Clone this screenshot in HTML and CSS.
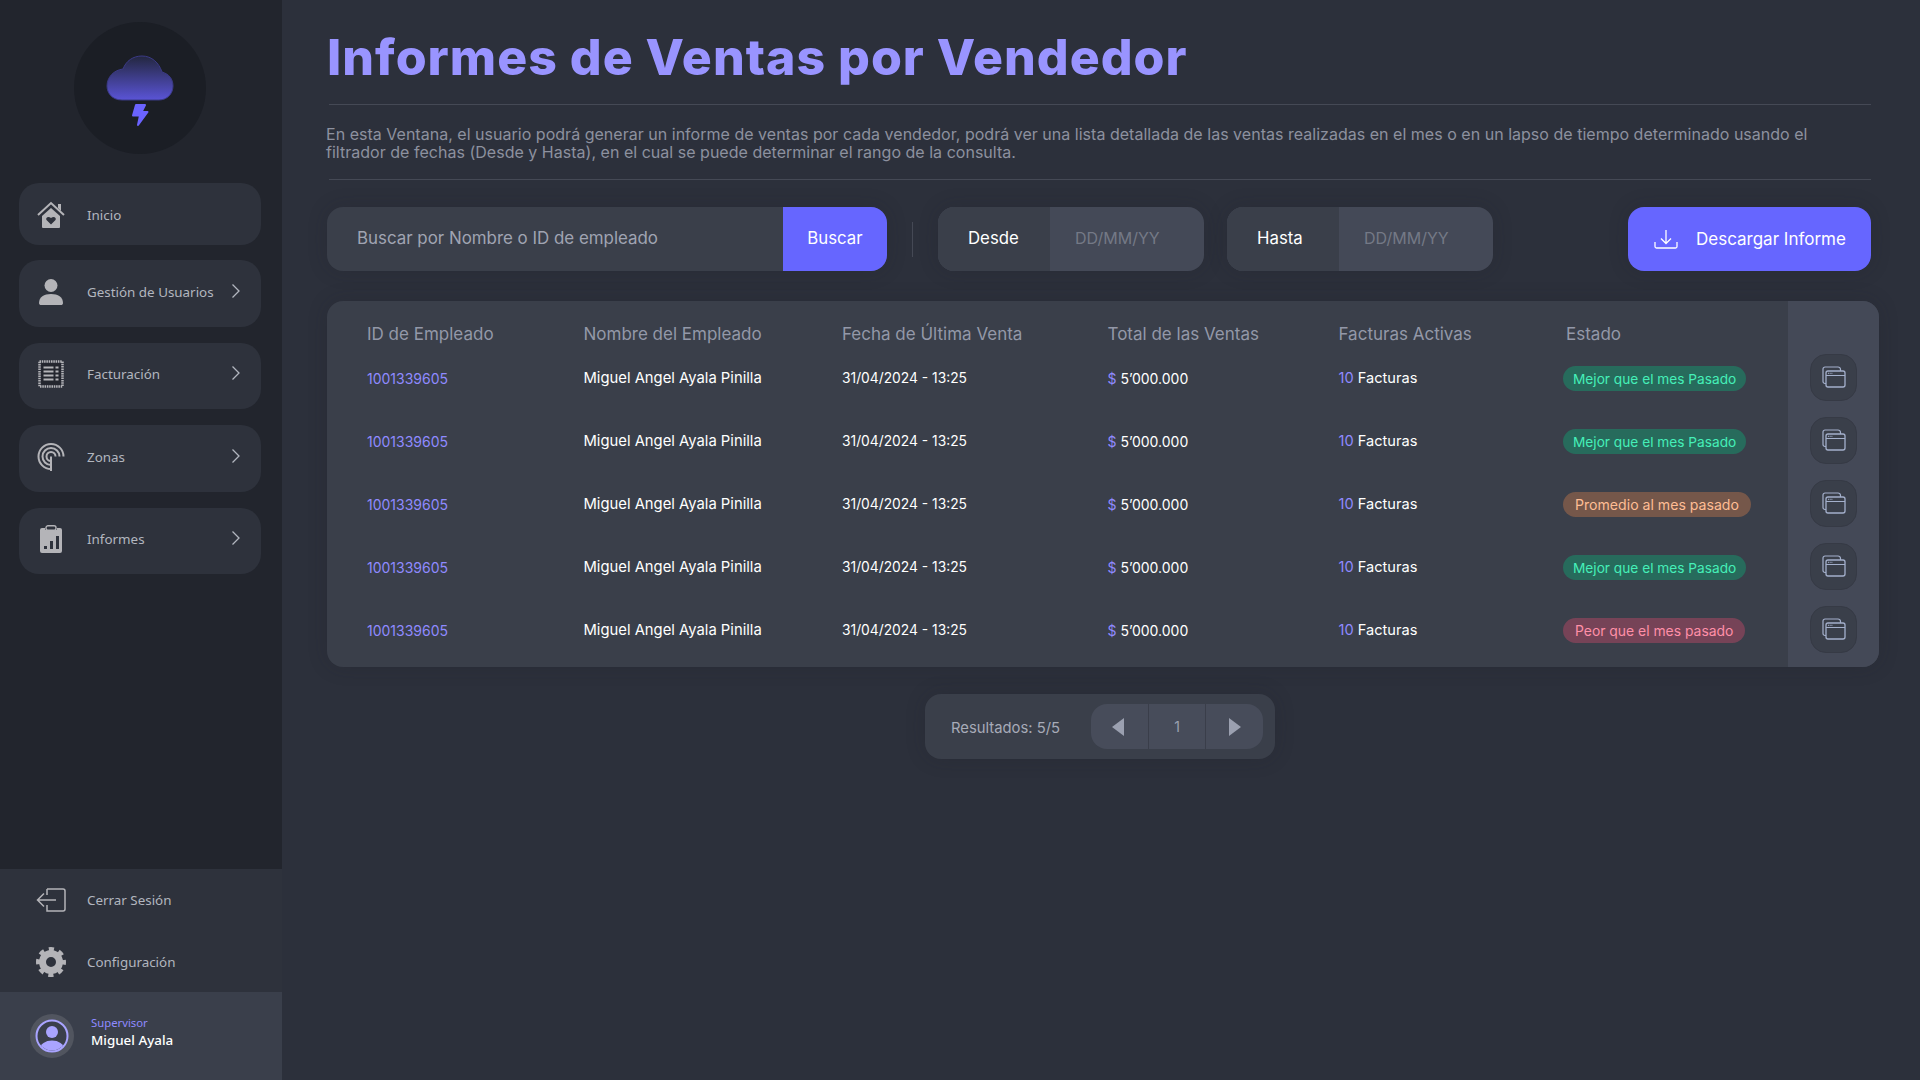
FILE: index.html
```html
<!DOCTYPE html>
<html lang="es">
<head>
    <meta charset="UTF-8">
    <meta name="viewport" content="width=device-width, initial-scale=1.0">
    <title>Informes de Ventas por Vendedor</title>
    <link rel="stylesheet" href="styles.css">
</head>
<body>
    <svg class="sprite" aria-hidden="true">
        <symbol id="icon-chevron" viewBox="0 0 9 16">
            <path d="M1.5 1.5 8 8l-6.5 6.5" fill="none" stroke="currentColor" stroke-width="1.3"/>
        </symbol>
        <symbol id="icon-window" viewBox="0 0 24 22">
            <path d="M4 17.5H3a2 2 0 0 1-2-2V3a2 2 0 0 1 2-2h13a2.500 2.500 0 0 1 2.500 2.500V5" fill="none" stroke="currentColor" stroke-width="1.200"/>
            <rect x="4" y="5" width="19" height="16" rx="2" fill="none" stroke="currentColor" stroke-width="1.300"/>
            <path d="M4 9.500h19" stroke="currentColor" stroke-width="1.200"/>
            <path d="M6 7.300h5" stroke="currentColor" stroke-width="1" stroke-dasharray="1 .7"/>
        </symbol>
    </svg>

    <aside class="sidebar">
        <div class="logo">
            <svg width="68" height="72" viewBox="0 0 68 72">
                <defs>
                    <linearGradient id="cloud" x1="0" y1="0" x2="0" y2="1">
                        <stop offset="0" stop-color="#23273f"/>
                        <stop offset="1" stop-color="#5a54d6"/>
                    </linearGradient>
                </defs>
                <path d="M16 45C6 45 1 38 1 31 1 22 8 15 17 14 20 6 27 1 36 1 46 1 53 8 56 17 63 19 67 24 67 31 67 39 61 45 53 45Z" fill="url(#cloud)" stroke="#3b3a86" stroke-width="1"/>
                <path d="M30 50h9l-3.500 7h6L32 70l2-9.500h-7z" fill="#6b63ff" stroke="#6b63ff" stroke-width="2" stroke-linejoin="round"/>
            </svg>
        </div>

        <nav class="nav">
            <a class="nav-item nav-item-short">
                <svg class="nav-icon" viewBox="0 0 30 28">
                    <path d="M2 14 15 2l13 12" fill="none" stroke="#b4b4b8" stroke-width="2"/>
                    <path d="M22 3h3v7l-3-3z" fill="#b4b4b8"/>
                    <path d="M6 15 15 7l9 8v11a1 1 0 0 1-1 1H7a1 1 0 0 1-1-1z" fill="#b4b4b8"/>
                    <path d="M15 23.500 10.500 19c-1.300-2 1.500-4.500 4.500-2 3-2.500 5.800 0 4.500 2z" fill="#2e323c"/>
                </svg>
                <span>Inicio</span>
            </a>
            <a class="nav-item">
                <svg class="nav-icon" viewBox="0 0 30 28">
                    <circle cx="15" cy="7.500" r="6.500" fill="#b4b4b8"/>
                    <path d="M3 25c0-6 5-9 12-9s12 3 12 9c0 1.500-1 2-2 2H5c-1 0-2-.5-2-2z" fill="#b4b4b8"/>
                </svg>
                <span>Gestión de Usuarios</span>
                <svg class="chevron"><use href="#icon-chevron"/></svg>
            </a>
            <a class="nav-item">
                <svg class="nav-icon" viewBox="0 0 30 28">
                    <rect x="3.500" y="1.500" width="23" height="25" fill="none" stroke="#b4b4b8" stroke-width="2.500" stroke-dasharray="1.500 .8"/>
                    <rect x="5.200" y="3.200" width="19.600" height="21.600" fill="#23262e"/>
                    <path d="M7.500 7.500h10M7.500 11.500h10M7.500 15.500h10M7.500 19.500h10" stroke="#b4b4b8" stroke-width="2"/>
                    <path d="M19.500 7.500h3M19.500 11.500h3M19.500 15.500h3M19.500 19.500h3" stroke="#b4b4b8" stroke-width="2"/>
                </svg>
                <span>Facturación</span>
                <svg class="chevron"><use href="#icon-chevron"/></svg>
            </a>
            <a class="nav-item">
                <svg class="nav-icon" viewBox="0 0 30 28">
                    <g fill="none" stroke="#b4b4b8" stroke-width="2">
                        <path d="M15 26A12.500 12.500 0 1 1 27.500 13.500"/>
                        <path d="M15 22A8.500 8.500 0 1 1 23.500 13.500"/>
                        <path d="M15 18A4.500 4.500 0 1 1 19.500 13.500"/>
                        <path d="M15 13.500V28"/>
                    </g>
                </svg>
                <span>Zonas</span>
                <svg class="chevron"><use href="#icon-chevron"/></svg>
            </a>
            <a class="nav-item">
                <svg class="nav-icon" viewBox="0 0 30 28">
                    <path d="M6 3h3v2h12V3h3a2 2 0 0 1 2 2v21a2 2 0 0 1-2 2H6a2 2 0 0 1-2-2V5a2 2 0 0 1 2-2z" fill="#b4b4b8"/>
                    <rect x="10" y="0.800" width="10" height="4.500" rx="2" fill="#2e323c" stroke="#b4b4b8" stroke-width="1.400"/>
                    <path d="M8 21h3v3H8zM14 16h3v8h-3zM20 11h3v13h-3z" fill="#2e323c"/>
                </svg>
                <span>Informes</span>
                <svg class="chevron"><use href="#icon-chevron"/></svg>
            </a>
        </nav>

        <div class="sidebar-bottom">
            <a class="bottom-link">
                <svg class="nav-icon" viewBox="0 0 30 24">
                    <path d="M11 1h16a2 2 0 0 1 2 2v18a2 2 0 0 1-2 2H11v-6M11 7V1" fill="none" stroke="#b4b4b8" stroke-width="1.500"/>
                    <path d="M20 12H2M8 5.500 1.500 12 8 18.500" fill="none" stroke="#b4b4b8" stroke-width="1.500"/>
                </svg>
                <span>Cerrar Sesión</span>
            </a>
            <a class="bottom-link">
                <svg class="nav-icon" viewBox="0 0 30 30">
                    <circle cx="15" cy="15" r="8.500" fill="none" stroke="#b4b4b8" stroke-width="7"/>
                    <circle cx="15" cy="15" r="13" fill="none" stroke="#b4b4b8" stroke-width="4" stroke-dasharray="5.200 5.010" stroke-dashoffset="2.600"/>
                </svg>
                <span>Configuración</span>
            </a>
        </div>

        <div class="profile">
            <div class="avatar">
                <svg width="34" height="34" viewBox="0 0 34 34">
                    <defs>
                        <clipPath id="avatar-clip"><circle cx="17" cy="17" r="14.500"/></clipPath>
                    </defs>
                    <circle cx="17" cy="17" r="15.500" fill="#3a3f4b" stroke="#a9a4ff" stroke-width="2"/>
                    <circle cx="17" cy="13" r="6" fill="#a9a4ff"/>
                    <ellipse cx="17" cy="30" rx="12" ry="8.500" fill="#a9a4ff" clip-path="url(#avatar-clip)"/>
                </svg>
            </div>
            <div class="profile-text">
                <div class="profile-role">Supervisor</div>
                <div class="profile-name">Miguel Ayala</div>
            </div>
        </div>
    </aside>

    <main class="main">
        <h1>Informes de Ventas por Vendedor</h1>
        <hr class="rule">
        <p class="intro">En esta Ventana, el usuario podrá generar un informe de ventas por cada vendedor, podrá ver una lista detallada de las ventas realizadas en el mes o en un lapso de tiempo determinado usando el filtrador de fechas (Desde y Hasta), en el cual se puede determinar el rango de la consulta.</p>
        <hr class="rule">

        <div class="toolbar">
            <div class="search">
                <input type="text" placeholder="Buscar por Nombre o ID de empleado">
                <button type="button" class="search-btn">Buscar</button>
            </div>
            <div class="divider"></div>
            <div class="date-box">
                <span class="date-label">Desde</span>
                <input type="text" placeholder="DD/MM/YY">
            </div>
            <div class="date-box">
                <span class="date-label">Hasta</span>
                <input type="text" placeholder="DD/MM/YY">
            </div>
            <button type="button" class="download-btn">
                <svg width="24" height="20" viewBox="0 0 24 20">
                    <path d="M12 1v13M7 9.500l5 5 5-5" fill="none" stroke="#fff" stroke-width="1.300"/>
                    <path d="M1 13v4.500A1.500 1.500 0 0 0 2.500 19h19a1.500 1.500 0 0 0 1.500-1.500V13" fill="none" stroke="#fff" stroke-width="1.300"/>
                </svg>
                Descargar Informe
            </button>
        </div>

        <div class="table-card">
            <table class="sales">
                <thead>
                    <tr>
                        <th>ID de Empleado</th>
                        <th>Nombre del Empleado</th>
                        <th>Fecha de Última Venta</th>
                        <th>Total de las Ventas</th>
                        <th>Facturas Activas</th>
                        <th class="state-head">Estado</th>
                    </tr>
                </thead>
                <tbody>
                    <tr>
                        <td class="accent">1001339605</td>
                        <td>Miguel Angel Ayala Pinilla</td>
                        <td>31/04/2024 - 13:25</td>
                        <td><span class="accent">$</span> 5’000.000</td>
                        <td><span class="accent">10</span> Facturas</td>
                        <td><span class="badge badge-good">Mejor que el mes Pasado</span></td>
                    </tr>
                    <tr>
                        <td class="accent">1001339605</td>
                        <td>Miguel Angel Ayala Pinilla</td>
                        <td>31/04/2024 - 13:25</td>
                        <td><span class="accent">$</span> 5’000.000</td>
                        <td><span class="accent">10</span> Facturas</td>
                        <td><span class="badge badge-good">Mejor que el mes Pasado</span></td>
                    </tr>
                    <tr>
                        <td class="accent">1001339605</td>
                        <td>Miguel Angel Ayala Pinilla</td>
                        <td>31/04/2024 - 13:25</td>
                        <td><span class="accent">$</span> 5’000.000</td>
                        <td><span class="accent">10</span> Facturas</td>
                        <td><span class="badge badge-mid">Promedio al mes pasado</span></td>
                    </tr>
                    <tr>
                        <td class="accent">1001339605</td>
                        <td>Miguel Angel Ayala Pinilla</td>
                        <td>31/04/2024 - 13:25</td>
                        <td><span class="accent">$</span> 5’000.000</td>
                        <td><span class="accent">10</span> Facturas</td>
                        <td><span class="badge badge-good">Mejor que el mes Pasado</span></td>
                    </tr>
                    <tr>
                        <td class="accent">1001339605</td>
                        <td>Miguel Angel Ayala Pinilla</td>
                        <td>31/04/2024 - 13:25</td>
                        <td><span class="accent">$</span> 5’000.000</td>
                        <td><span class="accent">10</span> Facturas</td>
                        <td><span class="badge badge-bad">Peor que el mes pasado</span></td>
                    </tr>
                </tbody>
            </table>
            <div class="row-actions">
                <div class="action-cell"><button type="button" class="action-btn"><svg><use href="#icon-window"/></svg></button></div>
                <div class="action-cell"><button type="button" class="action-btn"><svg><use href="#icon-window"/></svg></button></div>
                <div class="action-cell"><button type="button" class="action-btn"><svg><use href="#icon-window"/></svg></button></div>
                <div class="action-cell"><button type="button" class="action-btn"><svg><use href="#icon-window"/></svg></button></div>
                <div class="action-cell"><button type="button" class="action-btn"><svg><use href="#icon-window"/></svg></button></div>
            </div>
        </div>

        <div class="pagination">
            <span class="results">Resultados: 5/5</span>
            <div class="pager">
                <button type="button" class="pager-btn"><span class="arrow-left"></span></button>
                <span class="pager-num">1</span>
                <button type="button" class="pager-btn"><span class="arrow-right"></span></button>
            </div>
        </div>
    </main>
</body>
</html>
```

FILE: styles.css
```css
* {
    margin: 0;
    padding: 0;
    box-sizing: border-box;
}

body {
    font-family: "Inter", "Liberation Sans", sans-serif;
    background: #2c303b;
    color: #fff;
    height: 100vh;
    display: flex;
    overflow: hidden;
}

.sprite {
    display: none;
}

/* Sidebar */
.sidebar {
    width: 282px;
    flex-shrink: 0;
    background: #22252d;
    display: flex;
    flex-direction: column;
    font-family: "Noto Sans", sans-serif;
}

.logo {
    width: 132px;
    height: 132px;
    margin: 22px 0 0 74px;
    padding-top: 33px;
    border-radius: 50%;
    background: #1b1e25;
    display: flex;
    justify-content: center;
    align-items: flex-start;
}

.nav {
    margin: 29px 21px 0 19px;
    display: flex;
    flex-direction: column;
    gap: 16px;
}

.nav-item {
    height: 66.500px;
    background: #2e323c;
    border-radius: 20px;
    display: flex;
    align-items: center;
    padding: 0 21px 3px 17px;
    font-size: 13.400px;
    color: #b2b6bf;
}

.nav-item-short {
    height: 62px;
    margin-bottom: -1px;
    padding-top: 2px;
    padding-bottom: 0;
}

.nav-icon {
    width: 30px;
    height: 30px;
    flex-shrink: 0;
    margin-right: 21px;
}

.chevron {
    width: 9px;
    height: 16px;
    margin-left: auto;
    margin-top: -2px;
    color: #b2b6bf;
}

.sidebar-bottom {
    margin-top: auto;
    background: #2e323c;
    height: 123px;
    padding-top: 1px;
    display: flex;
    flex-direction: column;
    gap: 1px;
}

.bottom-link {
    height: 61px;
    display: flex;
    align-items: center;
    padding-left: 36px;
    font-size: 13.400px;
    color: #b2b6bf;
}

.profile {
    height: 88px;
    background: #3a3f4b;
    display: flex;
    align-items: center;
    padding-left: 30px;
}

.avatar {
    width: 44px;
    height: 44px;
    border-radius: 50%;
    background: #51555f;
    display: flex;
    align-items: center;
    justify-content: center;
}

.profile-text {
    margin: 0 0 8px 17px;
}

.profile-role {
    font-size: 11.300px;
    line-height: 16px;
    color: #8f8aff;
}

.profile-name {
    font-size: 13.400px;
    line-height: 19px;
    font-weight: 500;
}

/* Main */
.main {
    flex: 1;
    min-width: 0;
    padding: 0 41px 0 45px;
}

h1 {
    height: 104px;
    padding-top: 27px;
    font-size: 50px;
    line-height: 60px;
    font-weight: 800;
    color: #9994ff;
    letter-spacing: 1px;
}

.rule {
    height: 1px;
    margin: 0 8px 0 2px;
    border: none;
    background: #454955;
}

.intro {
    height: 74px;
    margin-left: -1px;
    padding: 20px 30px 0 0;
    font-size: 16px;
    line-height: 18px;
    letter-spacing: 0.02px;
    color: #8d919f;
}

.toolbar {
    margin: 27px 8px 30px 0;
    display: flex;
    height: 64px;
    align-items: center;
    font-size: 16.800px;
}

.toolbar input {
    font-family: inherit;
    font-size: 16px;
    padding-bottom: 2px;
    background: none;
    border: none;
    outline: none;
    color: #fff;
}

.search {
    width: 560px;
    height: 64px;
    display: flex;
    background: #3a3f4a;
    border-radius: 16px;
    overflow: hidden;
    box-shadow: 0 0 20px rgba(30, 30, 40, 0.2);
}

.toolbar .search input {
    flex: 1;
    min-width: 0;
    padding-left: 30px;
    font-size: 16.900px;
}

.search input::placeholder {
    color: #a0a4b2;
}

.search-btn {
    width: 104px;
    padding-bottom: 2px;
    background: #6666ff;
    border: none;
    color: #fff;
    font-family: inherit;
    font-size: 16.800px;
}

.divider {
    width: 1px;
    height: 35px;
    margin: 0 25px;
    background: #454955;
}

.date-box {
    width: 266px;
    height: 64px;
    margin-right: 23px;
    display: flex;
    background: #444957;
    border-radius: 16px;
    overflow: hidden;
    box-shadow: 0 0 20px rgba(30, 30, 40, 0.2);
}

.date-label {
    width: 112px;
    padding: 0 0 2px 30px;
    background: #3a3f4a;
    display: flex;
    align-items: center;
}

.date-box input {
    flex: 1;
    min-width: 0;
    padding-left: 25px;
}

.date-box input::placeholder {
    color: #747986;
}

.download-btn {
    width: 243px;
    height: 64px;
    margin-left: auto;
    background: #6666ff;
    border: none;
    border-radius: 16px;
    color: #fff;
    font-family: inherit;
    font-size: 17px;
    display: flex;
    align-items: center;
    padding-left: 26px;
    gap: 18px;
    box-shadow: 0 0 20px rgba(30, 30, 40, 0.2);
}

/* Table */
.table-card {
    height: 366px;
    display: flex;
    background: #3a3f4a;
    border-radius: 16px;
    overflow: hidden;
    box-shadow: 0 0 20px rgba(30, 30, 40, 0.2);
}

.sales {
    width: 1461px;
    height: 360px;
    table-layout: fixed;
    border-collapse: collapse;
}

.sales th {
    height: 45px;
    padding-top: 21px;
    font-size: 17px;
    line-height: 24px;
    font-weight: 400;
    text-align: left;
    color: #9398a8;
}

.sales td {
    height: 63px;
    padding-top: 1px;
    font-size: 14px;
    font-weight: 400;
    vertical-align: middle;
}

.sales td:nth-child(2) { font-size: 14.800px; }
.sales td:nth-child(3) { font-size: 13.800px; }
.sales td:nth-child(5) { font-size: 14.600px; }

.sales th:first-child,
.sales td:first-child {
    padding-left: 40px;
}

.sales th:nth-child(1) { width: 256.500px; }
.sales th:nth-child(2) { width: 258.500px; }
.sales th:nth-child(3) { width: 265.500px; }
.sales th:nth-child(4) { width: 231px; }
.sales th:nth-child(5) { width: 224.500px; }
.sales th:nth-child(6) { width: 225px; }

.sales .state-head {
    padding-left: 3px;
}

.accent {
    color: #8f8aff;
}

.badge {
    display: inline-block;
    height: 25px;
    line-height: 26px;
    border-radius: 13px;
    padding: 0 12px;
}

.badge-good {
    background: #276b5c;
    color: #45efb8;
    padding: 0 10px;
    font-size: 13.700px;
}

.badge-mid {
    background: #75574a;
    color: #ffbd94;
    font-size: 14.100px;
}

.badge-bad {
    background: #764357;
    color: #ff8fa8;
    font-size: 13.900px;
}

.row-actions {
    flex: 1;
    background: #444957;
    padding-top: 45px;
}

.action-cell {
    height: 63px;
    display: flex;
    align-items: center;
    justify-content: center;
}

.action-btn {
    width: 47px;
    height: 47px;
    background: #3a3f4a;
    border: 1px solid #363a45;
    border-radius: 16px;
    color: #a4b0cc;
    display: flex;
    align-items: center;
    justify-content: center;
}

.action-btn svg {
    width: 24px;
    height: 22px;
    margin-top: -2px;
}

/* Pagination */
.pagination {
    width: 350px;
    height: 65px;
    margin: 27px 0 0 598px;
    padding: 0 12px 0 26px;
    background: #3a3f4a;
    border-radius: 16px;
    display: flex;
    align-items: center;
    justify-content: space-between;
    box-shadow: 0 0 20px rgba(30, 30, 40, 0.2);
}

.results {
    font-size: 14.800px;
    padding-top: 2px;
    color: #a7abb8;
}

.pager {
    width: 172px;
    height: 45px;
    display: flex;
    background: #474c5a;
    border-radius: 16px;
    overflow: hidden;
}

.pager-btn {
    width: 57px;
    background: none;
    border: none;
    display: flex;
    align-items: center;
    justify-content: center;
}

.pager-num {
    flex: 1;
    border-left: 1px solid #3a3e4a;
    border-right: 1px solid #3a3e4a;
    display: flex;
    align-items: center;
    justify-content: center;
    font-size: 14px;
    color: #9ba0b0;
}

.arrow-left,
.arrow-right {
    width: 0;
    height: 0;
    border-top: 9px solid transparent;
    border-bottom: 9px solid transparent;
}

.arrow-left {
    margin-right: 3px;
    border-right: 12px solid #9ba0b0;
}

.arrow-right {
    border-left: 12px solid #9ba0b0;
}
```
